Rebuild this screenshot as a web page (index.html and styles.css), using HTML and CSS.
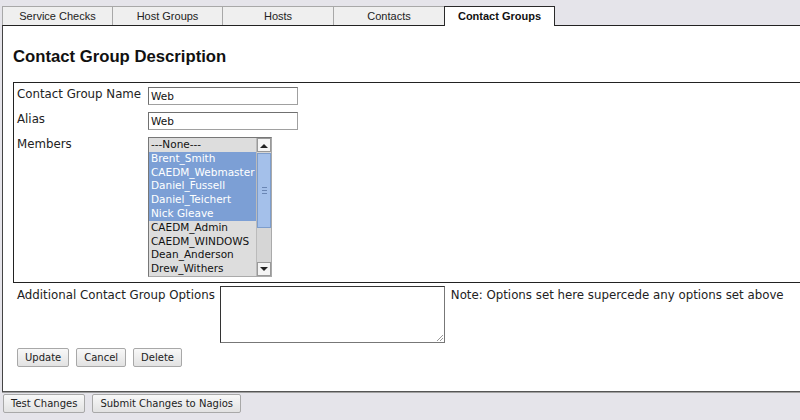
FILE: index.html
```html
<!DOCTYPE html>
<html>
<head>
<meta charset="utf-8">
<link rel="stylesheet" href="styles.css">
</head>
<body>
<div class="tabs">
  <div class="tab w111">Service Checks</div>
  <div class="tab w111">Host Groups</div>
  <div class="tab w112">Hosts</div>
  <div class="tab w112">Contacts</div>
  <div class="tab w111 active">Contact Groups</div>
</div>
<div class="panel">
  <h2 class="title">Contact Group Description</h2>
  <div class="formbox">
    <div class="lbl">Contact Group Name</div>
    <div class="field"><div class="input">Web</div></div>
    <div class="lbl">Alias</div>
    <div class="field"><div class="input">Web</div></div>
    <div class="lbl">Members</div>
    <div class="field">
      <div class="listbox">
        <div class="items">
          <div class="item">---None---</div>
          <div class="item sel">Brent_Smith</div>
          <div class="item sel">CAEDM_Webmaster</div>
          <div class="item sel">Daniel_Fussell</div>
          <div class="item sel">Daniel_Teichert</div>
          <div class="item sel">Nick Gleave</div>
          <div class="item">CAEDM_Admin</div>
          <div class="item">CAEDM_WINDOWS</div>
          <div class="item">Dean_Anderson</div>
          <div class="item">Drew_Withers</div>
        </div>
        <div class="scrollbar">
          <div class="arrow up"><svg width="8" height="5" viewBox="0 0 8 5"><path d="M0 5 L4 1 L8 5 Z" fill="#222"/></svg></div>
          <div class="track">
            <div class="thumb"><span class="grip"></span><span class="grip"></span><span class="grip"></span></div>
          </div>
          <div class="arrow down"><svg width="8" height="5" viewBox="0 0 8 5"><path d="M0 0 L8 0 L4 4 Z" fill="#222"/></svg></div>
        </div>
      </div>
    </div>
  </div>
  <div class="extra">
    <div class="lbl">Additional Contact Group Options</div>
    <div class="textarea"><svg class="resize" width="7" height="7" viewBox="0 0 7 7"><path d="M7 1 L1 7 M7 4 L4 7" stroke="#999" stroke-width="1"/></svg></div>
    <div class="note">Note: Options set here supercede any options set above</div>
  </div>
  <div class="actions">
    <button class="btn">Update</button>
    <button class="btn">Cancel</button>
    <button class="btn">Delete</button>
  </div>
</div>
<div class="bottom">
  <button class="btn">Test Changes</button>
  <button class="btn">Submit Changes to Nagios</button>
</div>
<svg class="cursor" width="12" height="19" viewBox="0 0 12 19"><path d="M0.5 0.5 L0.5 15 L4 11.8 L6.5 17.5 L8.6 16.6 L6.2 11 L10.8 11 Z" fill="#111" stroke="#bbb" stroke-width="1"/></svg>
</body>
</html>
```
FILE: styles.css
```css
html, body {
  margin: 0;
  padding: 0;
}
body {
  width: 800px;
  height: 420px;
  overflow: hidden;
  background: #e5e4ea;
  font-family: "Liberation Sans", Arial, sans-serif;
  color: #1a1a1a;
  position: relative;
}
.tabs {
  display: flex;
  align-items: flex-end;
  padding: 6px 0 0 2px;
  height: 19px;
  position: relative;
  z-index: 2;
}
.tab {
  box-sizing: border-box;
  height: 19px;
  margin-right: -1px;
  background: #efefef;
  border: 1px solid #a8a8a8;
  border-bottom: none;
  font-size: 11px;
  line-height: 18px;
  text-align: center;
  color: #222;
}
.w111 { width: 111px; }
.w112 { width: 112px; }
.tab.active {
  height: 20px;
  margin-bottom: -1px;
  background: #fff;
  border-color: #2a2a2a;
  font-weight: bold;
  color: #111;
  line-height: 19px;
  position: relative;
}
.panel {
  margin-left: 2px;
  width: 820px;
  height: 365px;
  background: #fff;
  border-top: 1px solid #222;
  border-left: 1px solid #444;
  border-bottom: 1px solid #555;
  box-shadow: 0 1px 0 #a0a0a0;
  padding: 0 0 0 10px;
  box-sizing: content-box;
  position: relative;
  z-index: 1;
}
.title {
  margin: 0;
  padding-top: 21px;
  height: 35px;
  font-size: 16.7px;
  line-height: 19px;
  font-weight: bold;
  color: #111;
}
.formbox {
  width: 800px;
  border: 1px solid #222;
  padding: 4px 0 5px 3px;
  display: grid;
  grid-template-columns: 131px 1fr;
  row-gap: 7px;
  align-items: start;
}
.lbl {
  font-family: "DejaVu Sans", sans-serif;
  font-size: 11.8px;
  line-height: 14px;
  color: #222;
  white-space: nowrap;
}
.input {
  box-sizing: border-box;
  width: 150px;
  height: 18px;
  border: 1px solid #a0a0a0;
  border-top-color: #707070;
  border-left-color: #707070;
  background: #fff;
  font-family: "DejaVu Sans", sans-serif;
  font-size: 10.5px;
  line-height: 16px;
  padding-left: 2px;
  color: #111;
}
.listbox {
  box-sizing: border-box;
  width: 124px;
  height: 140px;
  border: 1px solid #777;
  border-right-color: #aaa;
  border-bottom-color: #aaa;
  display: flex;
  background: #dcdcdc;
}
.items {
  flex: 1;
  font-family: "DejaVu Sans", sans-serif;
  font-size: 10.5px;
}
.item {
  height: 13.8px;
  line-height: 13.8px;
  padding-left: 2px;
  white-space: nowrap;
  overflow: hidden;
  color: #111;
  background: #dddddd;
}
.item.sel {
  background: #7c9fd5;
  color: #fff;
}
.scrollbar {
  width: 14px;
  display: flex;
  flex-direction: column;
  background: #d4d4d4;
  border-left: 1px solid #bbb;
}
.arrow {
  box-sizing: border-box;
  height: 14px;
  background: #f4f4f4;
  border: 1px solid #999;
  display: flex;
  align-items: center;
  justify-content: center;
}
.track {
  flex: 1;
  background: #d6d6d6;
  padding: 1px 0;
}
.thumb {
  box-sizing: border-box;
  height: 75px;
  background: #a4c0ea;
  border: 1px solid #7d9dcc;
  display: flex;
  flex-direction: column;
  align-items: center;
  justify-content: center;
  gap: 2px;
}
.grip {
  width: 5px;
  height: 1px;
  background: #6a86b4;
}
.extra {
  display: flex;
  align-items: flex-start;
  padding: 3px 0 0 4px;
}
.extra .lbl {
  padding-top: 2px;
}
.textarea {
  box-sizing: border-box;
  width: 225px;
  height: 57px;
  margin-left: 5px;
  border: 1px solid #777;
  border-top-color: #333;
  border-left-color: #333;
  background: #fff;
  position: relative;
  flex: none;
}
.resize {
  position: absolute;
  right: 1px;
  bottom: 1px;
}
.note {
  margin-left: 6px;
  padding-top: 2px;
  font-family: "DejaVu Sans", sans-serif;
  font-size: 11.8px;
  line-height: 14px;
  color: #222;
  white-space: nowrap;
}
.actions {
  display: flex;
  gap: 7px;
  padding: 5px 0 0 4px;
}
.btn {
  box-sizing: border-box;
  height: 19px;
  margin: 0;
  padding: 0 7px;
  border: 1px solid #a8a8a8;
  border-radius: 2px;
  background: linear-gradient(#f8f8f8, #e2e2e2);
  font-family: "DejaVu Sans", sans-serif;
  font-size: 10px;
  line-height: 17px;
  color: #222;
}
.bottom {
  display: flex;
  gap: 7px;
  padding: 2px 0 0 3px;
}
.cursor {
  position: absolute;
  left: 541px;
  top: 212px;
}
```
